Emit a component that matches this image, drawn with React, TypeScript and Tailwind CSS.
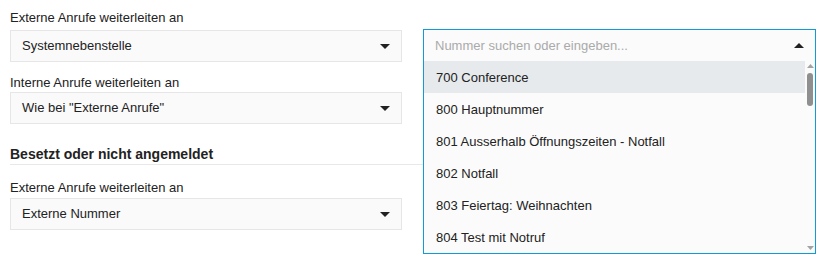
import React from "react";

const Caret = ({ up = false, color = "#222" }: { up?: boolean; color?: string }) => (
  <svg width="10" height="5" viewBox="0 0 10 5" className="block">
    {up ? <path d="M0 5 L5 0 L10 5 Z" fill={color} /> : <path d="M0 0 L10 0 L5 5 Z" fill={color} />}
  </svg>
);

const Select = ({ value }: { value: string }) => (
  <div className="h-[32px] w-[392px] border border-[#e6e6e6] bg-[#fafafa] flex items-center justify-between pl-[11px] pr-[11px] text-[#222]">
    <span>{value}</span>
    <Caret />
  </div>
);

const items = [
  "700 Conference",
  "800 Hauptnummer",
  "801 Ausserhalb Öffnungszeiten - Notfall",
  "802 Notfall",
  "803 Feiertag: Weihnachten",
  "804 Test mit Notruf",
];

export default function App() {
  return (
    <div
      className="w-[821px] h-[258px] bg-white flex text-[13px] leading-[16px] text-[#222] overflow-hidden"
      style={{ fontFamily: '"Liberation Sans", Arial, sans-serif' }}
    >
      <div className="w-[413px] ml-[10px] pt-[10px] flex flex-col">
        <div className="mb-[4px]">Externe Anrufe weiterleiten an</div>
        <Select value="Systemnebenstelle" />
        <div className="mt-[13px] mb-[1px]">Interne Anrufe weiterleiten an</div>
        <Select value={'Wie bei "Externe Anrufe"'} />
        <div className="mt-[22px] pb-[2px] border-b border-[#e8e8e8] font-bold text-[14px]">Besetzt oder nicht angemeldet</div>
        <div className="mt-[15px] mb-[2px]">Externe Anrufe weiterleiten an</div>
        <Select value="Externe Nummer" />
      </div>
      <div className="mt-[29px] w-[393px] h-[225px] border border-[#0f9ad8] bg-[#fbfbfb] flex flex-col">
        <div className="h-[31px] shrink-0 flex items-center justify-between pl-[11px] pr-[11px]">
          <span className="text-[#aaaaaa]">Nummer suchen oder eingeben...</span>
          <Caret up />
        </div>
        <div className="flex flex-1">
          <div className="flex-1 flex flex-col">
            {items.map((it, i) => (
              <div
                key={it}
                className={`h-[32px] flex items-center pl-[12px] pt-[2px] ${i === 0 ? "bg-[#e6eaed]" : ""}`}
              >
                {it}
              </div>
            ))}
          </div>
          <div className="w-[10px] flex flex-col items-center pt-[3px] pb-[3px]">
            <svg width="7" height="4" viewBox="0 0 7 4"><path d="M0 4 L3.5 0 L7 4 Z" fill="#a3a3a3" /></svg>
            <div className="mt-[5px] w-[6px] h-[33px] rounded-[3px] bg-[#8f8f8f]" />
            <div className="flex-1" />
            <svg width="7" height="4" viewBox="0 0 7 4"><path d="M0 0 L7 0 L3.5 4 Z" fill="#a3a3a3" /></svg>
          </div>
        </div>
      </div>
    </div>
  );
}
